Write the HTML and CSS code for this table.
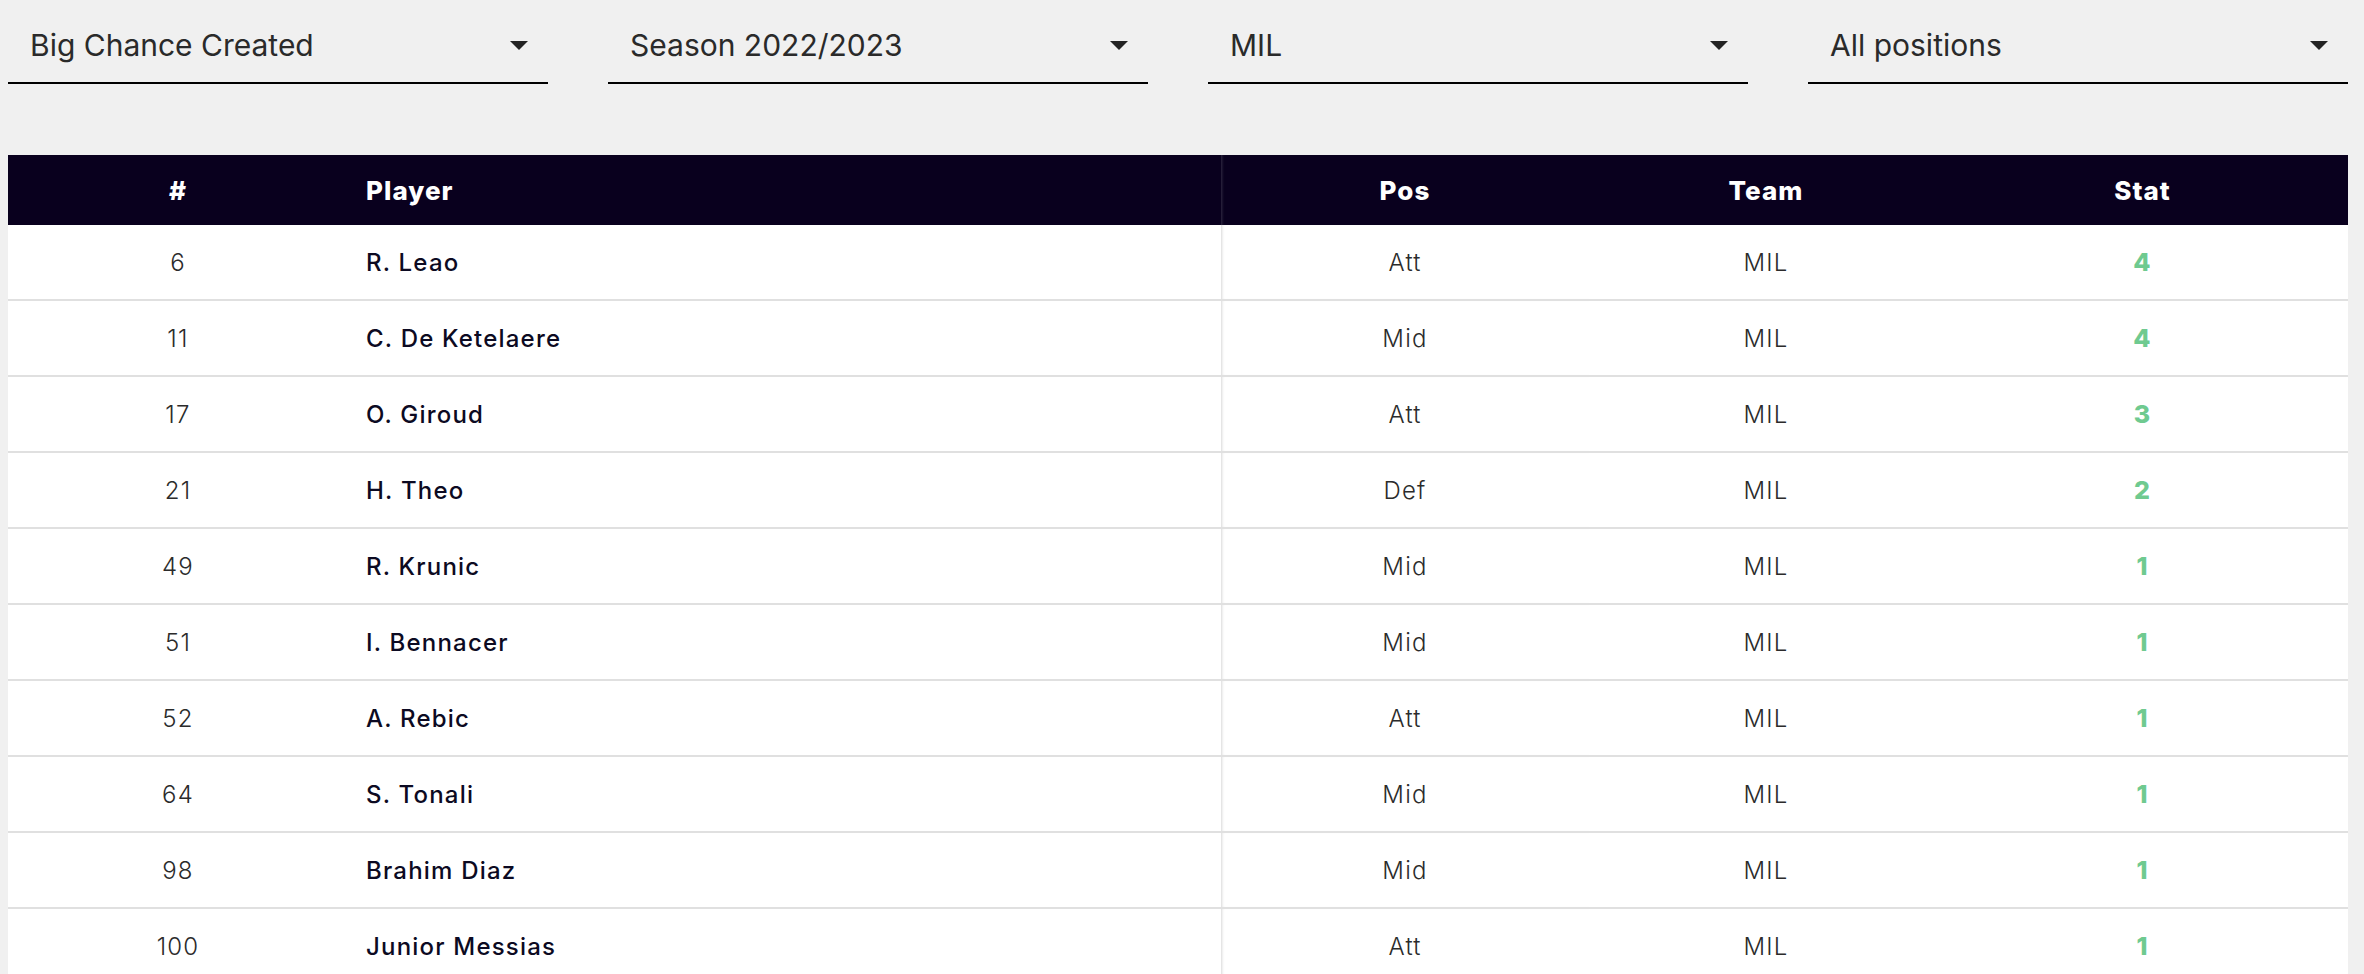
FILE: index.html
```html
<!DOCTYPE html>
<html lang="en">
<head>
<meta charset="utf-8">
<title>Player stats</title>
<link rel="stylesheet" href="styles.css">
</head>
<body>
<div class="page">
  <div class="filters">
    <div class="select"><span class="select-value">Big Chance Created</span><svg class="caret" viewBox="0 0 18 9" width="18" height="9"><path d="M0 0h18L9 9z"/></svg></div>
    <div class="select"><span class="select-value">Season 2022/2023</span><svg class="caret" viewBox="0 0 18 9" width="18" height="9"><path d="M0 0h18L9 9z"/></svg></div>
    <div class="select"><span class="select-value">MIL</span><svg class="caret" viewBox="0 0 18 9" width="18" height="9"><path d="M0 0h18L9 9z"/></svg></div>
    <div class="select"><span class="select-value">All positions</span><svg class="caret" viewBox="0 0 18 9" width="18" height="9"><path d="M0 0h18L9 9z"/></svg></div>
  </div>

  <div class="table">
    <div class="row head">
      <div class="cell num">#</div>
      <div class="cell player">Player</div>
      <div class="cell pos">Pos</div>
      <div class="cell team">Team</div>
      <div class="cell stat">Stat</div>
    </div>
    <div class="row"><div class="cell num">6</div><div class="cell player">R. Leao</div><div class="cell pos">Att</div><div class="cell team">MIL</div><div class="cell stat">4</div></div>
    <div class="row"><div class="cell num">11</div><div class="cell player">C. De Ketelaere</div><div class="cell pos">Mid</div><div class="cell team">MIL</div><div class="cell stat">4</div></div>
    <div class="row"><div class="cell num">17</div><div class="cell player">O. Giroud</div><div class="cell pos">Att</div><div class="cell team">MIL</div><div class="cell stat">3</div></div>
    <div class="row"><div class="cell num">21</div><div class="cell player">H. Theo</div><div class="cell pos">Def</div><div class="cell team">MIL</div><div class="cell stat">2</div></div>
    <div class="row"><div class="cell num">49</div><div class="cell player">R. Krunic</div><div class="cell pos">Mid</div><div class="cell team">MIL</div><div class="cell stat">1</div></div>
    <div class="row"><div class="cell num">51</div><div class="cell player">I. Bennacer</div><div class="cell pos">Mid</div><div class="cell team">MIL</div><div class="cell stat">1</div></div>
    <div class="row"><div class="cell num">52</div><div class="cell player">A. Rebic</div><div class="cell pos">Att</div><div class="cell team">MIL</div><div class="cell stat">1</div></div>
    <div class="row"><div class="cell num">64</div><div class="cell player">S. Tonali</div><div class="cell pos">Mid</div><div class="cell team">MIL</div><div class="cell stat">1</div></div>
    <div class="row"><div class="cell num">98</div><div class="cell player">Brahim Diaz</div><div class="cell pos">Mid</div><div class="cell team">MIL</div><div class="cell stat">1</div></div>
    <div class="row"><div class="cell num">100</div><div class="cell player">Junior Messias</div><div class="cell pos">Att</div><div class="cell team">MIL</div><div class="cell stat">1</div></div>
  </div>
</div>
</body>
</html>
```

FILE: styles.css
```css
html, body {
  margin: 0;
  padding: 0;
  background: #f0f0f0;
}

body {
  font-family: Inter, "Noto Sans", sans-serif;
  overflow: hidden;
}

.page {
  width: 2340px;
  padding-left: 8px;
}

.filters {
  display: flex;
  gap: 60px;
}

.select {
  box-sizing: border-box;
  width: 540px;
  height: 84px;
  padding: 8px 20px 0 22px;
  border-bottom: 2px solid #000;
  display: flex;
  align-items: center;
  justify-content: space-between;
}

.select-value {
  font-size: 30px;
  font-weight: 400;
  color: #2a2a2a;
  line-height: 1.2;
}

.caret {
  fill: #232323;
  display: block;
}

.table {
  margin-top: 71px;
  display: flex;
  flex-direction: column;
}

.row {
  display: grid;
  grid-template-columns: 340px 873px 368px 354px 405px;
  box-sizing: border-box;
  height: 76px;
  border-bottom: 2px solid #e0e0e0;
  background: #fff;
  align-items: stretch;
  font-size: 24px;
  letter-spacing: 0.05em;
  color: #2b2b2b;
}

.row.head {
  height: 70px;
  border-bottom: none;
  background: #09001e;
  color: #fff;
  font-size: 26px;
  letter-spacing: 0.04em;
}

.cell {
  display: flex;
  align-items: center;
  justify-content: center;
  font-weight: 300;
}

.cell.player {
  justify-content: flex-start;
  padding-left: 18px;
  font-weight: 500;
  color: #0c0a22;
}

.cell.pos {
  box-shadow: inset 3px 0 3px -2px rgba(0, 0, 0, 0.16);
}

.cell.stat {
  padding-right: 6px;
  color: #6fca90;
  font-weight: 800;
  font-size: 25px;
}

.head .cell,
.head .cell.player,
.head .cell.stat {
  font-weight: 800;
  color: #fff;
  font-size: 26px;
}

.head .cell.pos {
  box-shadow: inset 3px 0 3px -2px rgba(255, 255, 255, 0.18);
}
```
